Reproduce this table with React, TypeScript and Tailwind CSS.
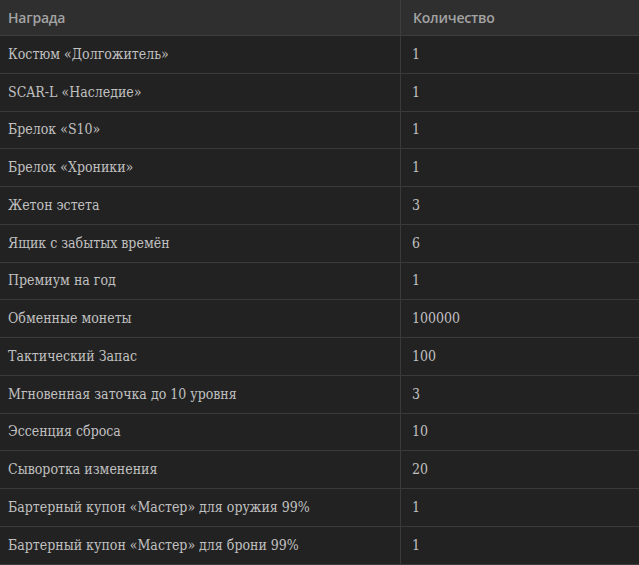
import React from "react";

const rows: [string, string][] = [
  ["Костюм «Долгожитель»", "1"],
  ["SCAR-L «Наследие»", "1"],
  ["Брелок «S10»", "1"],
  ["Брелок «Хроники»", "1"],
  ["Жетон эстета", "3"],
  ["Ящик с забытых времён", "6"],
  ["Премиум на год", "1"],
  ["Обменные монеты", "100000"],
  ["Тактический Запас", "100"],
  ["Мгновенная заточка до 10 уровня", "3"],
  ["Эссенция сброса", "10"],
  ["Сыворотка изменения", "20"],
  ["Бартерный купон «Мастер» для оружия 99%", "1"],
  ["Бартерный купон «Мастер» для брони 99%", "1"],
];

export default function App() {
  return (
    <div className="w-[639px] h-[565px] bg-[#222222] overflow-hidden">
      <div className="flex h-[36px] bg-[#2f2f2f] border-b border-[#3d3d3d] text-[#a3a3a3] font-semibold text-[14px] items-center font-['Open_Sans',sans-serif] tracking-[-0.2px]">
        <div className="w-[401px] h-full flex items-center pl-[8px] border-r border-[#3d3d3d]">Награда</div>
        <div className="flex-1 pl-[12px]">Количество</div>
      </div>
      {rows.map(([name, qty], i) => (
        <div
          key={i}
          className="flex h-[37.75px] border-b border-[#3a3a3a] text-[#c0c0c0] text-[14px] font-['DejaVu_Serif',serif] font-stretch-condensed"
        >
          <div className="w-[401px] flex items-center pl-[8px] border-r border-[#3a3a3a]">{name}</div>
          <div className="flex-1 flex items-center pl-[11px]">{qty}</div>
        </div>
      ))}
    </div>
  );
}
